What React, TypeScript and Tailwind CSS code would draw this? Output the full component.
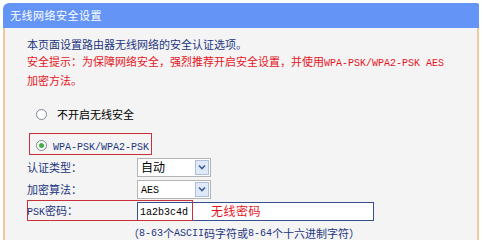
const cjk = "font-['Noto_Sans_CJK_SC',sans-serif]";

function M({ children }: { children: React.ReactNode }) {
  return <span className="font-['Liberation_Mono',monospace] text-[10px]">{children}</span>;
}

function Radio({ checked }: { checked?: boolean }) {
  return (
    <span className="flex h-[11px] w-[11px] items-center justify-center rounded-full border border-[#7c8794] bg-white">
      {checked && <span className="h-[5px] w-[5px] rounded-full bg-[#3fb13f]" />}
    </span>
  );
}

function Select({ value, mono }: { value: string; mono?: boolean }) {
  return (
    <div className="flex h-[19px] w-[74px] items-center border border-[#b4b4b4] bg-white">
      <span className="flex-1 pl-[3px] text-[12px] leading-none text-black">
        {mono ? <M>{value}</M> : value}
      </span>
      <span className="mr-[1px] flex h-[15px] w-[14px] items-center justify-center border border-[#a9bfdc] bg-[#dfe9f7]">
        <svg width="8" height="6" viewBox="0 0 8 6">
          <path d="M1 1.5 L4 4.5 L7 1.5" fill="none" stroke="#3b5b9a" strokeWidth="1.6" />
        </svg>
      </span>
    </div>
  );
}

export default function App() {
  return (
    <div className={`h-[240px] w-[484px] overflow-hidden bg-white pl-[3px] pt-[3px] ${cjk}`}>
      <div className="w-[476px]">
        <div className="flex h-[25px] items-center rounded-tl-[6px] rounded-tr-[2px] bg-[#6394f6] pl-[7px] text-[11px] tracking-[0.5px] text-white">
          无线网络安全设置
        </div>
        <div className="relative h-[212px] border-x-2 border-[#f2c99a] bg-[#f4f4f4] pl-[22px] pt-[8px] text-[11px] text-[#1c3480]">
          <div className="leading-[17px]">本页面设置路由器无线网络的安全认证选项。</div>
          <div className="leading-[17px] text-[#e4141e]">
            安全提示：为保障网络安全，强烈推荐开启安全设置，并使用<M>WPA-PSK/WPA2-PSK AES</M>
          </div>
          <div className="leading-[17px] text-[#e4141e]">加密方法。</div>

          <div className="mt-[15px] flex h-[20px] items-center gap-[10px] pl-[9px] text-black">
            <Radio />
            <span className="text-[11px]">不开启无线安全</span>
          </div>

          <div className="mt-[11px] flex h-[21px] items-center gap-[6px] pl-[9px] text-black">
            <Radio checked />
            <span className="text-[#1c3480]">
              <M>WPA-PSK/WPA2-PSK</M>
            </span>
          </div>

          <div className="flex h-[22px] items-center">
            <span className="w-[110px]">认证类型：</span>
            <Select value="自动" />
          </div>
          <div className="flex h-[22px] items-center">
            <span className="w-[110px]">加密算法：</span>
            <Select value="AES" mono />
          </div>
          <div className="flex h-[22px] items-center">
            <span className="w-[110px]">
              <M>PSK</M>密码：
            </span>
            <div className="flex h-[19px] w-[237px] items-center border border-[#34508f] bg-white pl-[2px]">
              <span className="w-[71px] text-black">
                <M>1a2b3c4d</M>
              </span>
              <span className="text-[12px] tracking-[0.5px] text-[#e4141e]">无线密码</span>
            </div>
          </div>
          <div className="flex h-[22px] items-center pl-[101px]">
            （<M>8-63</M>个<M>ASCII</M>码字符或<M>8-64</M>个十六进制字符）
          </div>

          <div className="absolute left-[24px] top-[105px] h-[22px] w-[123px] border-[1.5px] border-[#c8303c]" />
          <div className="absolute left-[22px] top-[172px] h-[21px] w-[166px] border-[1.5px] border-[#c8303c]" />
        </div>
      </div>
    </div>
  );
}
